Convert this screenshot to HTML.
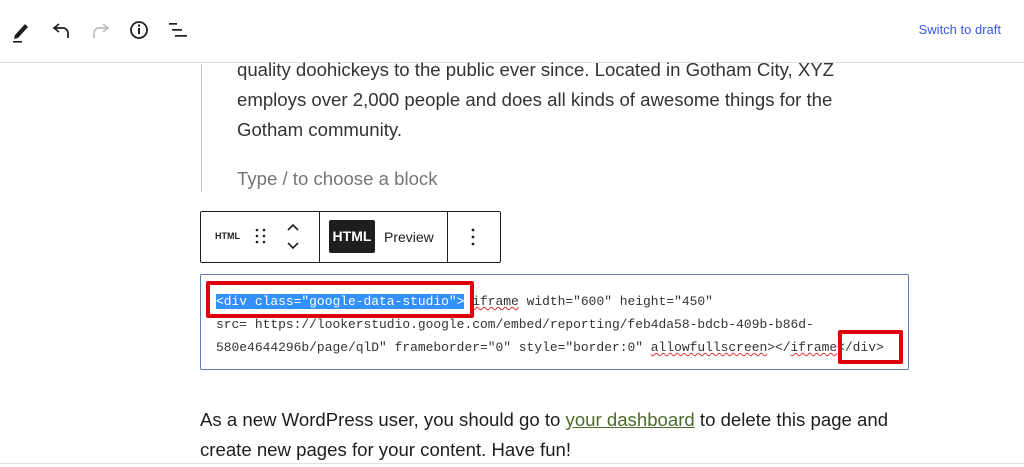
<!DOCTYPE html>
<html><head><style>
body{margin:0;width:1024px;height:467px;overflow:hidden;background:#fff;font-family:"Liberation Sans",sans-serif;position:relative;color:#1e1e1e}
.a{position:absolute}
.p{font-size:18.6px;color:#333;line-height:30px}
.code{font-family:"Liberation Mono",monospace;font-size:12.95px;color:#333;white-space:pre}
.sq{text-decoration:underline wavy #d33;text-decoration-thickness:1px}
</style></head><body>
<div class="a" style="left:0;top:62px;width:1024px;height:1px;background:#e0e0e0"></div>
<svg class="a" style="left:10px;top:18px" width="190" height="26" viewBox="0 0 190 26">
<path d="M5 17 L15 6 L18 9 L8 20 L4 21 Z" fill="#1e1e1e"/><rect x="3" y="23" width="9" height="1.6" fill="#1e1e1e"/>
<path d="M45 10 H53 a5 5 0 0 1 5 5 V20 M49 6 L44 10 L49 14" stroke="#1e1e1e" stroke-width="1.7" fill="none"/>
<path d="M84 20 V15 a5 5 0 0 1 5 -5 H97 M93 6 L98 10 L93 14" stroke="#bbb" stroke-width="1.7" fill="none"/>
<circle cx="129" cy="12" r="8" stroke="#1e1e1e" stroke-width="1.8" fill="none"/><rect x="128" y="10" width="2" height="6" fill="#1e1e1e"/><circle cx="129" cy="7.6" r="1.2" fill="#1e1e1e"/>
<rect x="159" y="5" width="8" height="1.7" fill="#1e1e1e"/><rect x="162" y="11" width="10" height="1.7" fill="#1e1e1e"/><rect x="165" y="17" width="12" height="1.7" fill="#1e1e1e"/>
</svg>
<div class="a" style="right:23px;top:22px;font-size:13px;color:#3858e9">Switch to draft</div>
<div class="a" style="left:201px;top:64px;width:1px;height:128px;background:#ccc"></div>
<div class="a p" style="left:237px;top:55px">quality doohickeys to the public ever since. Located in Gotham City, XYZ<br>employs over 2,000 people and does all kinds of awesome things for the<br>Gotham community.</div>
<div class="a p" style="left:237px;top:164px;color:#757575">Type / to choose a block</div>
<div class="a" style="left:200px;top:211px;width:299px;height:50px;border:1px solid #1e1e1e;border-radius:2px"></div>
<div class="a" style="left:319px;top:212px;width:1px;height:50px;background:#1e1e1e"></div>
<div class="a" style="left:447px;top:212px;width:1px;height:50px;background:#1e1e1e"></div>
<div class="a" style="left:215px;top:231px;font-size:9px;font-weight:bold">HTML</div>
<svg class="a" style="left:250px;top:222px" width="60" height="30"><g fill="#1e1e1e"><circle cx="7" cy="8" r="1.3"/><circle cx="14" cy="8" r="1.3"/><circle cx="7" cy="14" r="1.3"/><circle cx="14" cy="14" r="1.3"/><circle cx="7" cy="20" r="1.3"/><circle cx="14" cy="20" r="1.3"/></g><path d="M38 8 L43 3 L48 8 M38 21 L43 26 L48 21" stroke="#1e1e1e" stroke-width="1.6" fill="none"/></svg>
<div class="a" style="left:329px;top:220px;width:46px;height:33px;background:#1e1e1e;border-radius:2px;color:#fff;font-size:14px;font-weight:bold;line-height:33px;text-align:center">HTML</div>
<div class="a" style="left:384px;top:229px;font-size:14px">Preview</div>
<svg class="a" style="left:468px;top:226px" width="10" height="22"><g fill="#1e1e1e"><circle cx="5" cy="4" r="1.4"/><circle cx="5" cy="11" r="1.4"/><circle cx="5" cy="18" r="1.4"/></g></svg>
<div class="a" style="left:200px;top:274px;width:707px;height:94px;border:1.5px solid #6a7ab8;border-radius:2px"></div>
<div class="a code" style="left:216px;top:290px;line-height:23px"><span style="background:#3390ff;color:#fff">&lt;div class="google-data-studio"&gt;</span> <span class="sq">iframe</span> width="600" height="450"
src= https://lookerstudio.google.com/embed/reporting/feb4da58-bdcb-409b-b86d-
580e4644296b/page/qlD" frameborder="0" style="border:0" <span class="sq">allowfullscreen</span>&gt;&lt;/<span class="sq">iframe</span>&lt;/div&gt;</div>
<div class="a" style="left:206px;top:281px;width:260px;height:29px;border:4px solid #e0000b;border-radius:2px"></div>
<div class="a" style="left:838px;top:330px;width:57px;height:26px;border:4px solid #e0000b;border-radius:2px"></div>
<div class="a p" style="left:200px;top:405px;color:#1e1e1e">As a new WordPress user, you should go to <span style="color:#4a6b2a;text-decoration:underline">your dashboard</span> to delete this page and<br>create new pages for your content. Have fun!</div>
<div class="a" style="left:0;top:463px;width:1024px;height:1px;background:#e0e0e0"></div>
</body></html>
